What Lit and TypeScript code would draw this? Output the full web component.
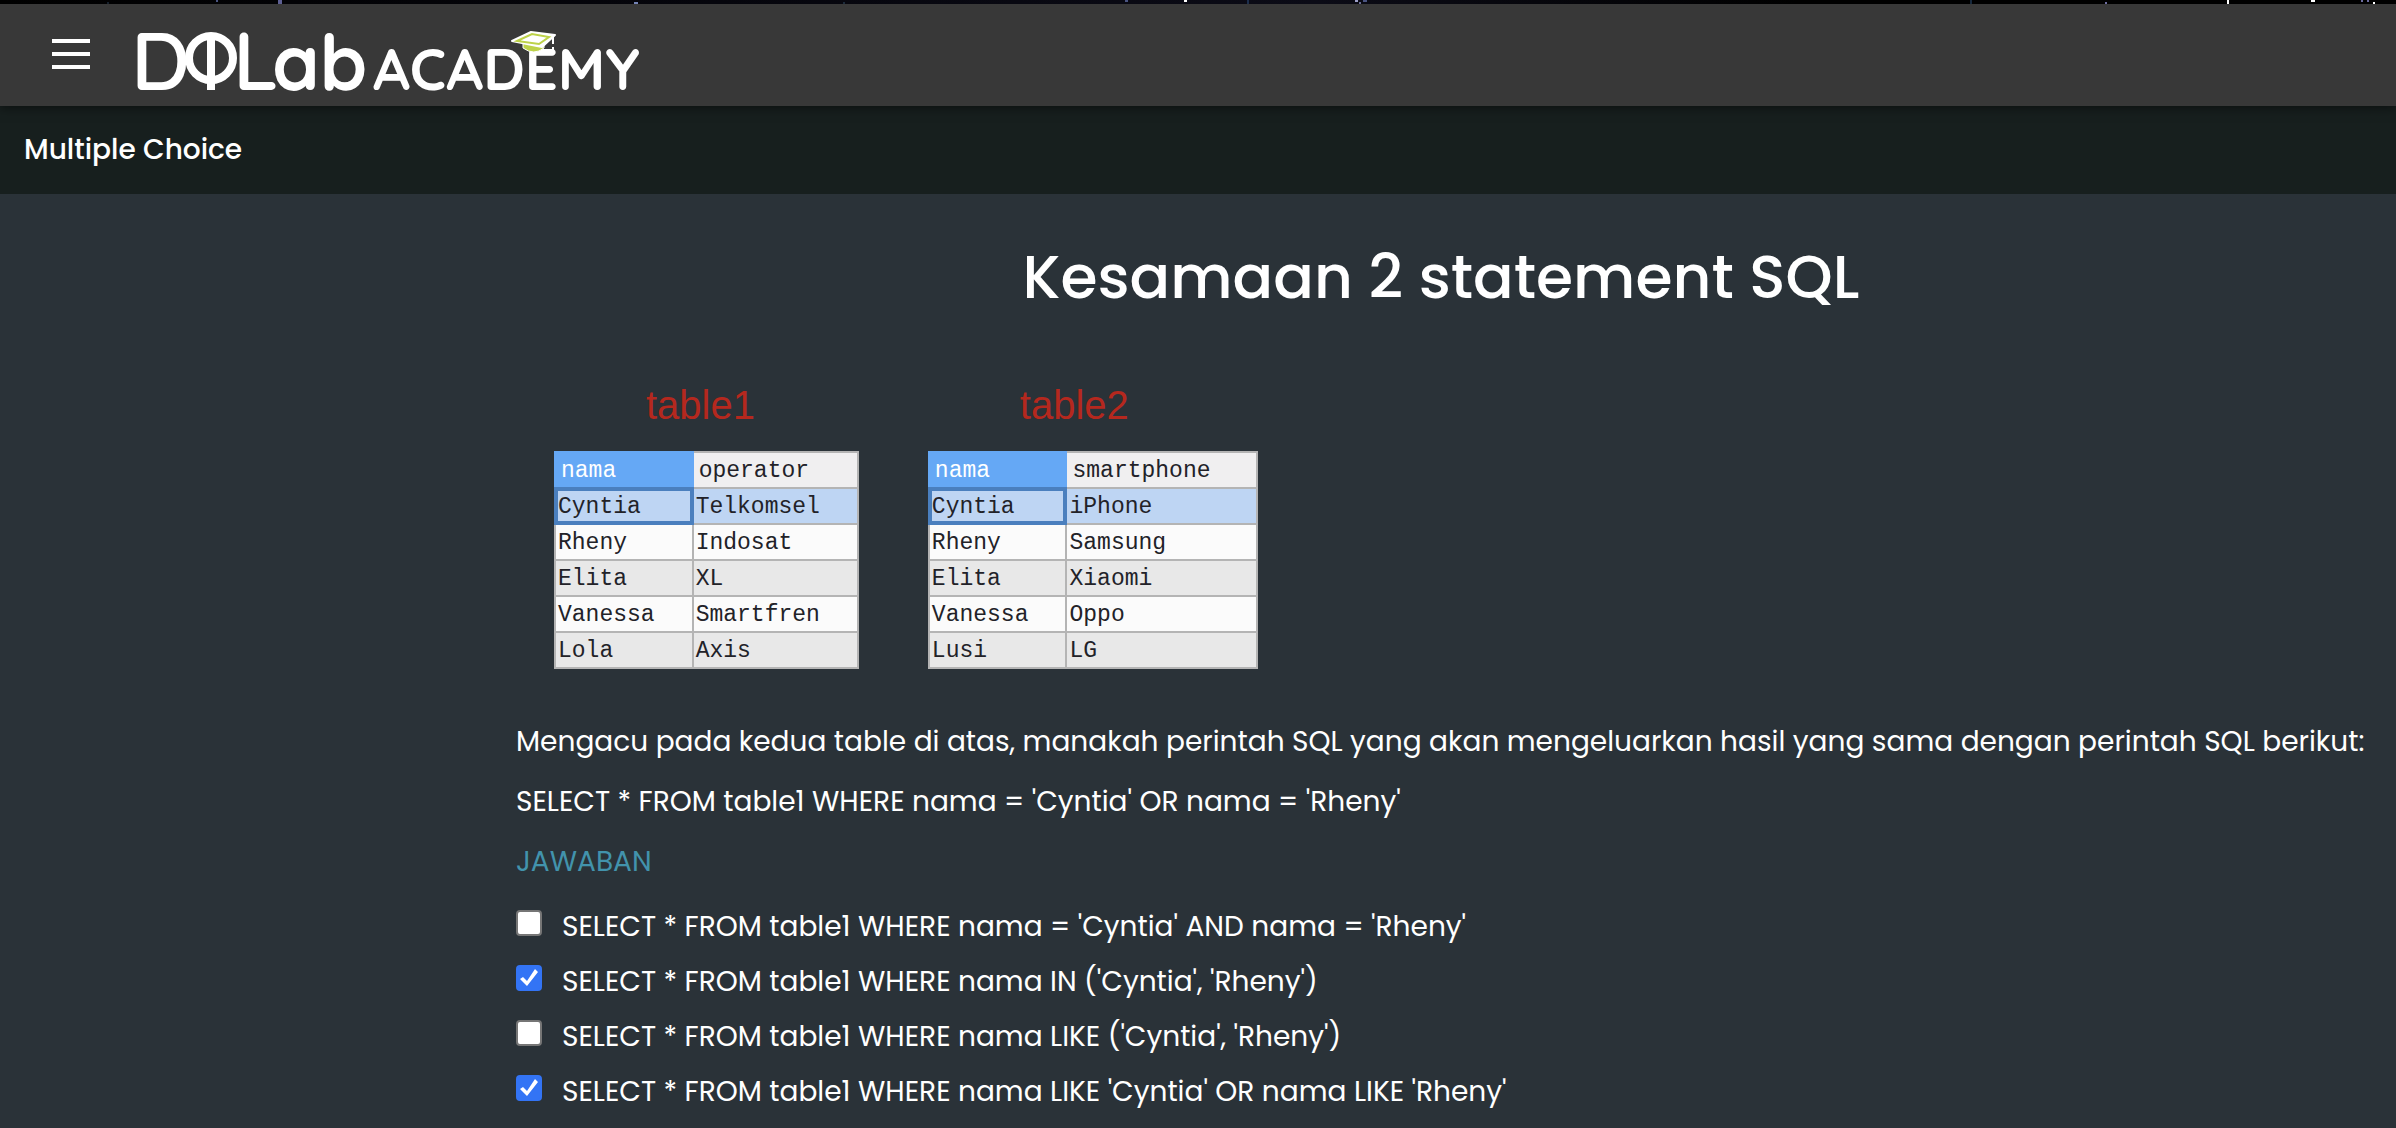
import { LitElement, html, css, svg } from "lit";
import { customElement, property, state } from "lit/decorators.js";

interface Option {
  text: string;
  checked: boolean;
}

interface Speck {
  x: number;
  y: number;
  w: number;
  h: number;
  fill: string;
}

const specks: Speck[] = [
  { x: 107, y: 2, w: 2, h: 2, fill: "#16202c" },
  { x: 216, y: 0, w: 2, h: 2, fill: "#4a5480" },
  { x: 278, y: 0, w: 4, h: 4, fill: "#5d5f92" },
  { x: 634, y: 2, w: 4, h: 2, fill: "#7382b4" },
  { x: 843, y: 2, w: 2, h: 2, fill: "#1c2a3a" },
  { x: 1125, y: 0, w: 3, h: 2, fill: "#4a5480" },
  { x: 1184, y: 0, w: 3, h: 2, fill: "#ffffff" },
  { x: 1247, y: 0, w: 2, h: 4, fill: "#1c2e4c" },
  { x: 1355, y: 0, w: 3, h: 2, fill: "#9d9fc8" },
  { x: 1359, y: 2, w: 2, h: 2, fill: "#6a6c94" },
  { x: 1363, y: 0, w: 4, h: 2, fill: "#4a5480" },
  { x: 1970, y: 0, w: 2, h: 4, fill: "#16283c" },
  { x: 2105, y: 2, w: 2, h: 2, fill: "#6c6ca0" },
  { x: 2227, y: 0, w: 2, h: 4, fill: "#ffffff" },
  { x: 2311, y: 0, w: 4, h: 2, fill: "#ffffff" },
  { x: 2361, y: 0, w: 2, h: 2, fill: "#6c6ca0" },
  { x: 2367, y: 0, w: 2, h: 2, fill: "#6c6ca0" },
  { x: 2373, y: 2, w: 2, h: 2, fill: "#ffffff" },
];

@customElement("academy-header")
export class AcademyHeader extends LitElement {
  static styles = css`
    :host {
      display: block;
      position: relative;
      box-shadow: 0 2px 10px rgba(0, 0, 0, 0.5);
    }
    .sky {
      display: block;
      width: 100%;
      height: 4px;
      background: linear-gradient(90deg, #000, #05050c 30%, #0b0b16 55%, #000 75%);
    }
    .bar {
      display: flex;
      align-items: flex-start;
      gap: 30px;
      height: 102px;
      padding-left: 46px;
      background: #383838;
    }
    .menu {
      display: flex;
      flex-direction: column;
      gap: 9px;
      margin-top: 29px;
      padding: 6px;
      border: 0;
      background: none;
      cursor: pointer;
    }
    .line {
      width: 38px;
      height: 4px;
      background: #fff;
    }
    .logo {
      display: block;
      overflow: visible;
    }
    .word {
      font-family: Quicksand, Comfortaa, Inter, "Liberation Sans", sans-serif;
      font-weight: 700;
      fill: #fff;
    }
    .big {
      font-size: 82px;
      font-weight: 600;
    }
    .mid {
      font-size: 76px;
    }
    .small {
      font-size: 58px;
    }
  `;

  render() {
    return html`
      <svg class="sky" aria-hidden="true">
        ${specks.map(
          (s) => svg`<rect x=${s.x} y=${s.y} width=${s.w} height=${s.h} fill=${s.fill}></rect>`
        )}
      </svg>
      <div class="bar">
        <button class="menu" type="button" aria-label="Menu">
          <span class="line"></span><span class="line"></span><span class="line"></span>
        </button>
        <a href="#">
          <svg class="logo" width="530" height="102" viewBox="0 0 530 102" role="img" aria-label="DQLab Academy">
            <text class="word big" x="5" y="86">D</text>
            <circle cx="85" cy="54" r="22" fill="none" stroke="#fff" stroke-width="8"></circle>
            <path d="M85 32V86" stroke="#fff" stroke-width="8"></path>
            <text class="word big" x="107" y="86">L</text>
            <text class="word mid" x="146" y="86">ab</text>
            <text class="word small" x="247" y="86">ACADEMY</text>
            <path d="M397 37V44Q408 52 418 44V37Z" fill="#bdd249" stroke="#fff" stroke-width="1"></path>
            <path d="M386 37L405 28L429 31L416 43Z" fill="#fff" stroke="#fff" stroke-width="2" stroke-linejoin="round"></path>
            <path d="M391 37L406 30L423 33L413 40Z" fill="#fff" stroke="#bdd249" stroke-width="2"></path>
            <path d="M427 32V40M427 43V46" stroke="#fff" stroke-width="2"></path>
          </svg>
        </a>
      </div>
    `;
  }
}

@customElement("data-sheet")
export class DataSheet extends LitElement {
  @property() name = "";
  @property({ attribute: false }) columns: string[] = [];
  @property({ attribute: false }) rows: string[][] = [];

  static styles = css`
    :host {
      display: block;
    }
    .sheet {
      border-collapse: collapse;
      font: 23px/32px "Liberation Mono", monospace;
      color: #222228;
    }
    .name {
      padding: 0 0 22px 92px;
      font: 40px/48px "Liberation Sans", sans-serif;
      color: #b5281e;
      text-align: left;
    }
    .cell {
      box-sizing: border-box;
      height: 36px;
      padding: 1px 37px 0 2px;
      border: 2px solid #b4b4b4;
      background: #fbfbfb;
      font-weight: 400;
      text-align: left;
    }
    .head {
      padding-left: 5px;
      padding-right: 45px;
      background: #f0eff0;
    }
    .head:first-child {
      border-color: #65a8f5;
      background: #65a8f5;
      color: #fff;
    }
    .row:nth-child(odd) .cell {
      background: #e8e8e8;
    }
    .row:first-child .cell {
      background: #bed5f3;
    }
    .row:first-child .cell:first-child {
      outline: 4px solid #4a7fbe;
      outline-offset: -3px;
    }
  `;

  render() {
    return html`
      <table class="sheet">
        <caption class="name">${this.name}</caption>
        <thead>
          <tr>${this.columns.map((c) => html`<th class="cell head" scope="col">${c}</th>`)}</tr>
        </thead>
        <tbody>
          ${this.rows.map(
            (r) => html`<tr class="row">${r.map((c) => html`<td class="cell">${c}</td>`)}</tr>`
          )}
        </tbody>
      </table>
    `;
  }
}

@customElement("app-root")
export class AppRoot extends LitElement {
  @state() private options: Option[] = [
    { text: "SELECT * FROM table1 WHERE nama = 'Cyntia' AND nama = 'Rheny'", checked: false },
    { text: "SELECT * FROM table1 WHERE nama IN ('Cyntia', 'Rheny')", checked: true },
    { text: "SELECT * FROM table1 WHERE nama LIKE ('Cyntia', 'Rheny')", checked: false },
    { text: "SELECT * FROM table1 WHERE nama LIKE 'Cyntia' OR nama LIKE 'Rheny'", checked: true },
  ];

  static styles = css`
    :host {
      display: block;
      min-height: 100vh;
      background: #2a3238;
      color: #fff;
      font: 28px/40px Poppins, "Liberation Sans", sans-serif;
    }
    .crumb {
      padding: 24px;
      background: #171f1e;
      font-weight: 500;
    }
    .content {
      padding: 38px 30px 0 516px;
    }
    .title {
      margin: 0;
      font-size: 60px;
      line-height: 90px;
      font-weight: 500;
      text-align: center;
    }
    .sheets {
      display: flex;
      gap: 69px;
      padding: 59px 38px 53px;
    }
    .text {
      margin: 0 0 20px;
      white-space: nowrap;
    }
    .answer {
      color: #4293ac;
      margin-bottom: 25px;
    }
    .options {
      display: flex;
      flex-direction: column;
      gap: 15px;
      margin: 0;
      padding: 0;
      border: 0;
    }
    .option {
      display: flex;
      align-items: flex-start;
      gap: 20px;
    }
    .box {
      appearance: none;
      box-sizing: border-box;
      width: 26px;
      height: 26px;
      margin: 3px 0 0;
      border: 2px solid #767676;
      border-radius: 4px;
      background: #fff;
    }
    .box:checked {
      border-color: #3374f5;
      background: #3374f5;
    }
    .box:checked::before {
      content: "";
      display: block;
      width: 22px;
      height: 22px;
      background: #fff;
      clip-path: polygon(2px 12px, 5px 10px, 9px 14px, 17px 2px, 20px 5px, 9px 19px);
    }
  `;

  private toggle(index: number) {
    this.options = this.options.map((o, i) => (i === index ? { ...o, checked: !o.checked } : o));
  }

  render() {
    return html`
      <academy-header></academy-header>
      <div class="crumb">Multiple Choice</div>
      <main class="content">
        <h1 class="title">Kesamaan 2 statement SQL</h1>
        <div class="sheets">
          <data-sheet
            name="table1"
            .columns=${["nama", "operator"]}
            .rows=${[
              ["Cyntia", "Telkomsel"],
              ["Rheny", "Indosat"],
              ["Elita", "XL"],
              ["Vanessa", "Smartfren"],
              ["Lola", "Axis"],
            ]}
          ></data-sheet>
          <data-sheet
            name="table2"
            .columns=${["nama", "smartphone"]}
            .rows=${[
              ["Cyntia", "iPhone"],
              ["Rheny", "Samsung"],
              ["Elita", "Xiaomi"],
              ["Vanessa", "Oppo"],
              ["Lusi", "LG"],
            ]}
          ></data-sheet>
        </div>
        <p class="text">
          Mengacu pada kedua table di atas, manakah perintah SQL yang akan mengeluarkan hasil yang sama dengan perintah SQL berikut:
        </p>
        <p class="text">SELECT * FROM table1 WHERE nama = 'Cyntia' OR nama = 'Rheny'</p>
        <p class="text answer">JAWABAN</p>
        <fieldset class="options" aria-label="JAWABAN">
          ${this.options.map(
            (o, i) => html`
              <label class="option">
                <input class="box" type="checkbox" .checked=${o.checked} @change=${() => this.toggle(i)} />
                <span>${o.text}</span>
              </label>
            `
          )}
        </fieldset>
      </main>
    `;
  }
}
